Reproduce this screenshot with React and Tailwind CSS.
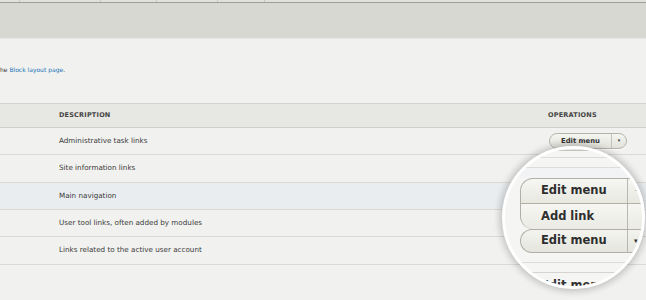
import React from 'react';

const rows = [
  { label: 'Administrative task links', h: 'h-[27px]', bg: '' },
  { label: 'Site information links', h: 'h-[28px]', bg: '' },
  { label: 'Main navigation', h: 'h-[27px]', bg: 'bg-[#e9edf0]' },
  { label: 'User tool links, often added by modules', h: 'h-[27px]', bg: '' },
  { label: 'Links related to the active user account', h: 'h-[28px]', bg: '' },
];

const SmallButton = () => (
  <div className="flex h-[16px] w-[78px] items-stretch rounded-full border border-[#b4b4ac] bg-gradient-to-b from-[#f6f6f1] to-[#e2e2da] text-[#333] shadow-[0_1px_0_rgba(255,255,255,0.8)]">
    <div className="flex flex-1 items-center justify-center text-[6.8px] font-bold">Edit menu</div>
    <div className="flex w-[15px] items-center justify-center border-l border-[#c4c4bc] text-[5px]">▾</div>
  </div>
);

const Magnifier = () => (
  <div className="absolute left-[502px] top-[146px] h-[143px] w-[143px] overflow-hidden rounded-full border-[3px] border-white bg-[#f5f5f3] shadow-[0_0_6px_3px_rgba(0,0,0,0.18)]">
    <div className="flex flex-col">
      <div className="ml-[47px] h-[2px] w-[71px] rounded-b-md border-x border-b border-[#c4c4bc] bg-[#e4e4dd]" />
      <div className="mt-[6px] h-px bg-[#dcdcd8]" />
      <div className="h-[9px]" />
      <div className="h-px bg-[#dcdcd8]" />
      <div className="h-[10px] bg-[#f1f3f5]" />
      <div className="ml-[15px] flex flex-col text-[11.5px] font-bold text-[#2e2e2e]">
        <div className="flex h-[26px] rounded-tl-[13px] border border-r-0 border-[#b0b0a8] bg-gradient-to-b from-[#f7f7f3] to-[#e8e8e1]">
          <div className="flex w-[106px] items-center pl-[20px]">Edit menu</div>
          <div className="flex flex-1 items-center border-l border-[#b8b8b0] pl-[7px] text-[7px] font-normal">·</div>
        </div>
        <div className="flex h-[25px] rounded-bl-[13px] border-x border-r-0 border-[#b0b0a8] bg-gradient-to-b from-[#f6f6f2] to-[#ebebe4]">
          <div className="flex w-[106px] items-center pl-[20px]">Add link</div>
          <div className="flex-1 border-l border-[#b8b8b0]" />
        </div>
        <div className="flex h-[24px] rounded-l-full border border-r-0 border-[#b0b0a8] bg-gradient-to-b from-[#f4f4ef] to-[#e5e5de]">
          <div className="flex w-[106px] items-center pl-[20px]">Edit menu</div>
          <div className="flex flex-1 items-center border-l border-[#b8b8b0] pl-[6px] text-[7px] font-normal">▾</div>
        </div>
      </div>
      <div className="mt-[9px] h-px bg-[#dcdcd8]" />
      <div className="h-[9px]" />
      <div className="h-px bg-[#d4d4d0]" />
      <div className="mt-[6px] pl-[36px] text-[11.5px] font-bold leading-[12px] text-[#333]">Edit menu</div>
    </div>
  </div>
);

export default function App() {
  return (
    <div className="relative h-[300px] w-[646px] overflow-hidden bg-[#f1f1ef] font-['DejaVu_Sans',sans-serif] text-[#333]">
      {/* toolbar strip */}
      <div className="flex h-[2px] bg-[#e2e2dd]">
        <div className="w-[20px] border-r border-[#c9c9c4]" />
        <div className="w-[81px] border-r border-[#c9c9c4]" />
        <div className="w-[56px] border-r border-[#c9c9c4]" />
        <div className="w-[61px] border-r border-[#c9c9c4]" />
        <div className="w-[47px] border-r border-[#c9c9c4]" />
      </div>
      <div className="h-px bg-[#9e9e99]" />
      <div className="h-[35px] bg-[#d8d8d2]" />
      <div className="h-px bg-[#e6e6e2]" />

      <p className="mt-[27px] text-[6px] leading-[8px] text-[#3a3a3a]">
        he <a className="text-[#1a73b8]">Block layout page</a>.
      </p>

      {/* table */}
      <div className="mt-[29px] border-t border-[#d3d3cf]">
        <div className="flex h-[24px] items-center border-b border-[#cfcfcb] bg-[#e7e7e3] text-[6.5px] font-bold uppercase tracking-[0.2px] text-[#444]">
          <div className="w-[59px]" />
          <div className="flex-1">Description</div>
          <div className="w-[98px]">Operations</div>
        </div>
        {rows.map((row, i) => (
          <div
            key={row.label}
            className={`flex ${row.h} items-center border-b border-[#dadad6] text-[7.2px] text-[#3a3a3a] ${row.bg}`}
          >
            <div className="w-[59px]" />
            <div className="flex-1">{row.label}</div>
            <div className="w-[97px]">{i === 0 && <SmallButton />}</div>
          </div>
        ))}
      </div>

      <Magnifier />
    </div>
  );
}
